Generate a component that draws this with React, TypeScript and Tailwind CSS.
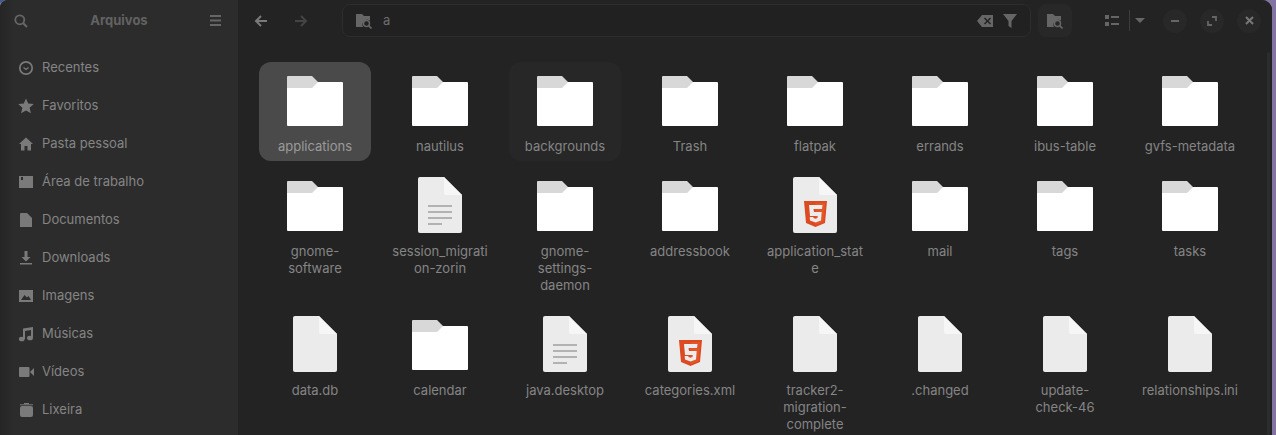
import React from "react";

const Folder = () => (
  <svg width="56" height="50" viewBox="0 0 56 50" className="mt-[4px] block">
    <path d="M1 0H25L31 6V12H0V1Q0 0 1 0Z" fill="#d8d8d8" />
    <path d="M0 12H25L31 6H55Q56 6 56 7V49Q56 50 55 50H1Q0 50 0 49Z" fill="#ffffff" />
  </svg>
);

const FileBase = ({ children }: { children?: React.ReactNode }) => (
  <svg width="44" height="56" viewBox="0 0 44 56" className="block">
    <path d="M2 0H26L44 18V54Q44 56 42 56H2Q0 56 0 54V2Q0 0 2 0Z" fill="#ebebeb" />
    <path d="M26 0L44 18H28Q26 18 26 16Z" fill="#f6f6f6" />
    {children}
  </svg>
);

const TextFile = () => (
  <FileBase>
    <rect x="10" y="28" width="24" height="2" fill="#b2b2b2" />
    <rect x="10" y="34" width="24" height="2" fill="#b2b2b2" />
    <rect x="10" y="40" width="24" height="2" fill="#b2b2b2" />
    <rect x="10" y="46" width="14" height="2" fill="#b2b2b2" />
  </FileBase>
);

const HtmlFile = () => (
  <FileBase>
    <path d="M11 24H34L32 46L22.500 50L13 46Z" fill="#dc4a22" />
    <path d="M22.500 26V48L30.500 45L32 26Z" fill="#e4552a" />
    <path d="M16 28H29.500L29 32H20.500L21 35H28.700L28 43.500L22.500 45.500L17 43.500L16.700 40H20.300L20.500 41L22.500 41.700L24.500 41L24.800 39H17Z" fill="#ececec" />
  </FileBase>
);

const ic = "#7a7a7a";
const S = ({ children, w = 16, h = 16, vb = "0 0 16 16" }: { children: React.ReactNode; w?: number; h?: number; vb?: string }) => (
  <svg width={w} height={h} viewBox={vb} className="block shrink-0">{children}</svg>
);

const sideIcons: Record<string, React.ReactNode> = {
  clock: <S><circle cx="8" cy="8" r="6.200" fill="none" stroke={ic} strokeWidth="1.700" /><path d="M5.500 7.500L8 9.500L10.500 7.500" fill="none" stroke={ic} strokeWidth="1.200" /></S>,
  star: <S><path d="M8 0.500L10.200 5.600L15.800 6.100L11.600 9.800L12.900 15.300L8 12.400L3.100 15.300L4.400 9.800L0.200 6.100L5.800 5.600Z" fill={ic} /></S>,
  home: <S><path d="M8 1.500L15 8H13V14.500H9.500V10H6.500V14.500H3V8H1Z" fill={ic} /></S>,
  desk: <S w={14} h={12} vb="0 0 14 12"><path d="M0 0H14V12H0Z M2 1V4H4V1Z" fill={ic} fillRule="evenodd" /></S>,
  doc: <S w={12} h={14} vb="0 0 12 14"><path d="M1 0H7L12 5V14H0V1Q0 0 1 0Z" fill={ic} /></S>,
  dl: <S><path d="M6.500 1H9.500V7H12.500L8 11.500L3.500 7H6.500Z" fill={ic} /><rect x="2" y="13" width="12" height="1.500" fill={ic} /></S>,
  img: <S w={14} h={12} vb="0 0 14 12"><path d="M0 0H14V12H0Z M2 10H12L9.500 6L8 7.500L5.500 5Z" fill={ic} fillRule="evenodd" /></S>,
  music: <S><path d="M5 2.500L15 1V11H13V4L7 5V13H5Z" fill={ic} /><ellipse cx="3.800" cy="13" rx="2.900" ry="2.300" fill={ic} /><ellipse cx="12" cy="12" rx="3" ry="2.300" fill={ic} /></S>,
  video: <S w={15} h={10} vb="0 0 15 10"><rect x="0" y="0" width="10.500" height="10" rx="1" fill={ic} /><path d="M11 5L15 1V9Z" fill={ic} /></S>,
  trash: <S w={13} h={14} vb="0 0 13 14"><rect x="0" y="3" width="13" height="11" rx="2" fill={ic} /><rect x="0" y="1.300" width="13" height="1" fill={ic} /><rect x="4" y="0" width="5" height="1.300" fill={ic} /></S>,
};

const places: [string, string][] = [
  ["clock", "Recentes"],
  ["star", "Favoritos"],
  ["home", "Pasta pessoal"],
  ["desk", "Área de trabalho"],
  ["doc", "Documentos"],
  ["dl", "Downloads"],
  ["img", "Imagens"],
  ["music", "Músicas"],
  ["video", "Vídeos"],
  ["trash", "Lixeira"],
];

type Kind = "folder" | "text" | "html" | "file";
const items: [Kind, string, string?][] = [
  ["folder", "applications", "bg-[#4a4a4a]"],
  ["folder", "nautilus"],
  ["folder", "backgrounds", "bg-[#272727]"],
  ["folder", "Trash"],
  ["folder", "flatpak"],
  ["folder", "errands"],
  ["folder", "ibus-table"],
  ["folder", "gvfs-metadata"],
  ["folder", "gnome-\nsoftware"],
  ["text", "session_migrati\non-zorin"],
  ["folder", "gnome-\nsettings-\ndaemon"],
  ["folder", "addressbook"],
  ["html", "application_stat\ne"],
  ["folder", "mail"],
  ["folder", "tags"],
  ["folder", "tasks"],
  ["file", "data.db"],
  ["folder", "calendar"],
  ["text", "java.desktop"],
  ["html", "categories.xml"],
  ["file", "tracker2-\nmigration-\ncomplete"],
  ["file", ".changed"],
  ["file", "update-\ncheck-46"],
  ["file", "relationships.ini"],
];

const SearchFolder = () => (
  <S w={16} h={16}>
    <path d="M0 1H6L8 3H14V7.500A5 5 0 0 0 7 14H0Z" fill="#666666" />
    <circle cx="10.500" cy="10.500" r="3" fill="none" stroke="#666666" strokeWidth="1.500" />
    <path d="M12.500 12.500L15.500 15.500" stroke="#666666" strokeWidth="1.700" />
  </S>
);

const WinBtn = ({ children }: { children: React.ReactNode }) => (
  <div className="w-[24px] h-[24px] shrink-0 rounded-full bg-[#282828] flex items-center justify-center">{children}</div>
);

export default function App() {
  return (
    <div className="relative w-[1276px] h-[435px] overflow-hidden flex bg-[#8273a0] text-[13px] font-['Inter',sans-serif] text-[#858585]">
      <div className="flex-1 flex overflow-hidden rounded-tl-[8px] rounded-tr-[10px] bg-[#262626] mr-[4px]">
        <aside className="w-[238px] shrink-0 bg-gradient-to-r from-[#252525] from-[0px] to-[#2c2c2c] to-[14px]">
          <div className="h-[41px] flex items-center pl-[14px] pr-[17px] justify-between">
            <S w={14} h={14} vb="0 0 14 14">
              <circle cx="5.800" cy="5.800" r="4.500" fill="none" stroke="#666666" strokeWidth="1.800" />
              <path d="M9 9L13 13" stroke="#666666" strokeWidth="2.200" />
            </S>
            <span className="font-bold text-[#626262]">Arquivos</span>
            <S w={11} h={11} vb="0 0 11 11">
              <path d="M0 0H11V2H0ZM0 4.500H11V6.500H0ZM0 9H11V11H0Z" fill="#666666" />
            </S>
          </div>
          <nav className="pt-[8px] pl-[18px]">
            {places.map(([icon, label]) => (
              <div key={label} className="h-[38px] flex items-center">
                <span className="w-[16px] flex justify-center">{sideIcons[icon]}</span>
                <span className="ml-[8px]">{label}</span>
              </div>
            ))}
          </nav>
        </aside>
        <main className="relative flex-1 min-w-0 bg-[#232323]">
          <header className="h-[41px] flex items-center">
            <div className="w-[104px] flex items-center pl-[15px] gap-[24px] shrink-0">
              <S>
                <path d="M14 8H3M8 3L3 8L8 13" fill="none" stroke="#7a7a7a" strokeWidth="2" />
              </S>
              <S>
                <path d="M2 8H13M8 3L13 8L8 13" fill="none" stroke="#444444" strokeWidth="2" />
              </S>
            </div>
            <div className="w-[689px] h-[33px] shrink-0 rounded-[8px] border border-[#2d2d2d] bg-[#212121] flex items-center pl-[13px] pr-[13px]">
              <SearchFolder />
              <span className="ml-[11px] text-[#6e6e6e]">a</span>
              <span className="flex-1" />
              <S w={16} h={12} vb="0 0 16 12">
                <path d="M5 0H16V12H5L0 6Z M7 3.500L9.500 6L7 8.500L8 9.500L10.500 7L13 9.500L14 8.500L11.500 6L14 3.500L13 2.500L10.500 5L8 2.500Z" fill="#666666" fillRule="evenodd" />
              </S>
              <span className="w-[10px]" />
              <S w={14} h={14} vb="0 0 14 14">
                <path d="M0 0H14L8.500 7V14L5.500 12V7Z" fill="#666666" />
              </S>
            </div>
            <div className="ml-[7px] w-[34px] h-[33px] shrink-0 rounded-[8px] bg-[#282828] flex items-center justify-center">
              <SearchFolder />
            </div>
            <div className="ml-[33px] flex items-center shrink-0">
              <S w={14} h={11} vb="0 0 14 11">
                <path d="M0 0H4V4H0ZM0 7H4V11H0ZM6 1H14V3H6ZM6 8H14V10H6Z" fill="#666666" />
              </S>
              <span className="ml-[10px] w-px h-[21px] bg-[#3d3d3d]" />
              <span className="ml-[5px]">
                <S w={10} h={5} vb="0 0 10 5"><path d="M0 0H10L5 5Z" fill="#666666" /></S>
              </span>
            </div>
            <div className="ml-[18px] flex items-center gap-[13px] shrink-0">
              <WinBtn><span className="w-[8px] h-[2px] bg-[#666666]" /></WinBtn>
              <WinBtn>
                <S w={10} h={10} vb="0 0 10 10">
                  <path d="M5 1H9V5M5 9H1V5" fill="none" stroke="#666666" strokeWidth="1.800" />
                </S>
              </WinBtn>
              <WinBtn>
                <S w={9} h={9} vb="0 0 9 9">
                  <path d="M1 1L8 8M8 1L1 8" stroke="#777777" strokeWidth="2" />
                </S>
              </WinBtn>
            </div>
          </header>
          <div className="grid grid-cols-[repeat(8,112px)] gap-x-[13px] gap-y-[6px] pl-[21px] pt-[21px] items-start">
            {items.map(([kind, label, bg]) => (
              <div key={label} className={`rounded-[12px] pb-[6px] ${bg ?? ""}`}>
                <div className="h-[76px] pt-[10px] flex justify-center items-start">
                  {kind === "folder" && <Folder />}
                  {kind === "text" && <TextFile />}
                  {kind === "html" && <HtmlFile />}
                  {kind === "file" && <FileBase />}
                </div>
                <div className={`text-center leading-[17px] whitespace-pre-line ${bg === "bg-[#4a4a4a]" ? "text-[#9a9a9a]" : ""}`}>{label}</div>
              </div>
            ))}
          </div>
          <div className="absolute right-[2px] top-[52px] bottom-0 w-[3px] rounded-full bg-[#2c2c2c]" />
        </main>
      </div>
      <div className="absolute left-0 top-0 w-[5px] h-[3px] bg-[#3a5f8c] [clip-path:polygon(0_0,100%_0,0_100%)]" />
    </div>
  );
}
